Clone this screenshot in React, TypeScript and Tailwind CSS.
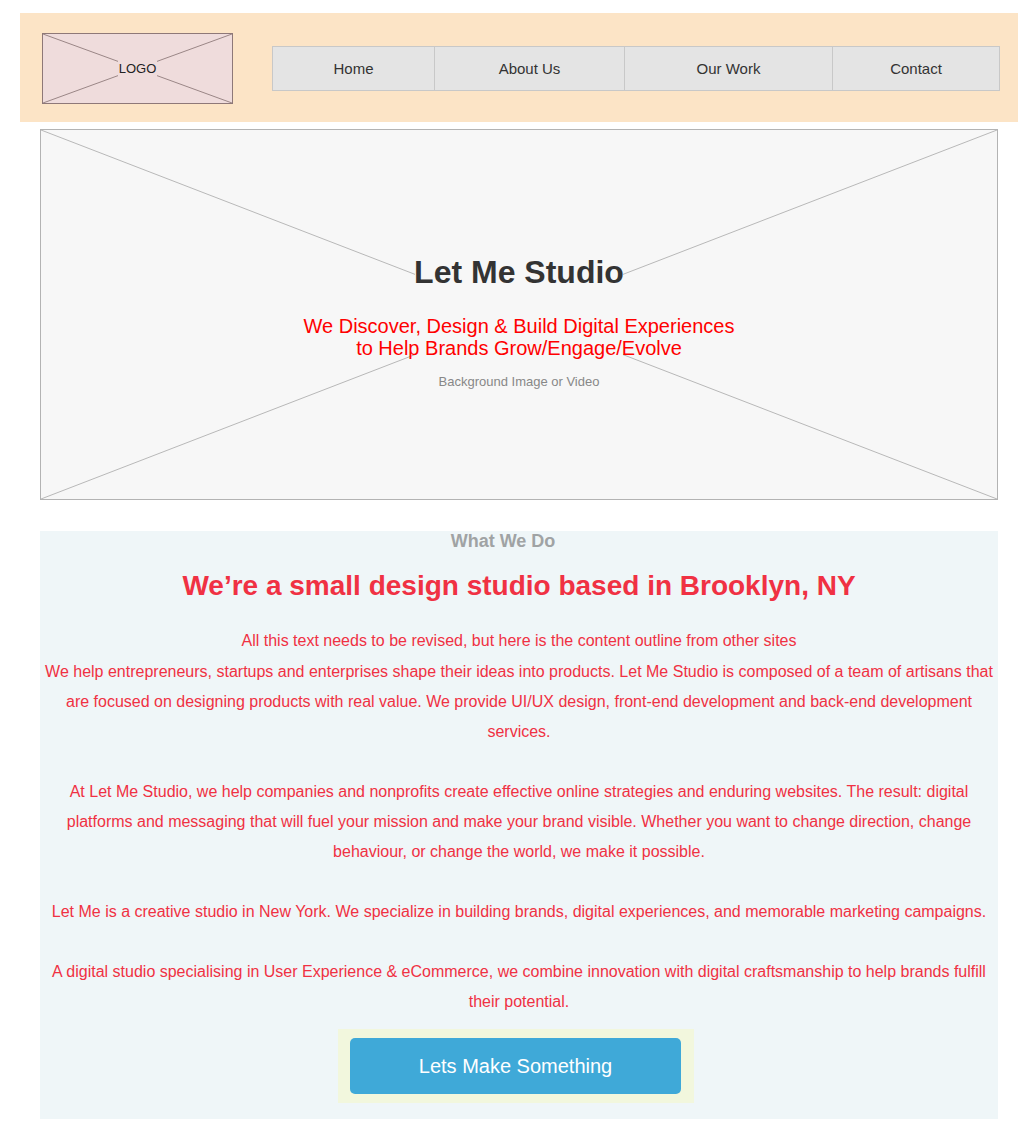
export default function App() {
  const navItems = [
    { label: "Home", w: "w-[161px]" },
    { label: "About Us", w: "w-[190px]" },
    { label: "Our Work", w: "w-[208px]" },
    { label: "Contact", w: "w-[167px]" },
  ];
  return (
    <div className="min-h-[1136px] bg-white pt-[13px] font-['Liberation_Sans',Arial,sans-serif]">
      <header className="ml-[20px] flex h-[109px] w-[998px] items-start bg-[#fce4c6]">
        <div className="relative ml-[22px] mt-[20px] flex h-[71px] w-[191px] items-center justify-center border border-[#8e7878] bg-[#efdcdc]">
          <svg className="absolute inset-0 h-full w-full" viewBox="0 0 189 69" preserveAspectRatio="none">
            <line x1="0" y1="0" x2="189" y2="69" stroke="#9a8686" strokeWidth="1" />
            <line x1="0" y1="69" x2="189" y2="0" stroke="#9a8686" strokeWidth="1" />
          </svg>
          <span className="relative bg-[#efdcdc] px-[1px] text-[13px] leading-[15px] text-[#222]">LOGO</span>
        </div>
        <nav className="ml-[39px] mt-[33px] flex h-[45px] border border-[#c8c8c8] bg-[#e4e4e4]">
          {navItems.map((n, i) => (
            <div
              key={n.label}
              className={`${n.w} flex items-center justify-center pt-[1px] text-[15px] text-[#333] ${i > 0 ? "border-l border-[#c8c8c8]" : ""}`}
            >
              {n.label}
            </div>
          ))}
        </nav>
      </header>

      <section className="relative ml-[40px] mt-[7px] h-[371px] w-[958px] border border-[#b3b3b3] bg-[#f7f7f7]">
        <svg className="absolute inset-0 h-full w-full" viewBox="0 0 956 369" preserveAspectRatio="none">
          <line x1="0" y1="0" x2="956" y2="369" stroke="#b8b8b8" strokeWidth="1" />
          <line x1="0" y1="369" x2="956" y2="0" stroke="#b8b8b8" strokeWidth="1" />
          <rect x="374" y="128" width="208" height="98" fill="#f7f7f7" />
        </svg>
        <div className="relative flex flex-col items-center pt-[124px] text-center">
          <h1 className="text-[32px] font-bold leading-[36px] text-[#333]">Let Me Studio</h1>
          <p className="mt-[25px] text-[20px] leading-[22px] text-[#ff0000]">
            We Discover, Design &amp; Build Digital Experiences
            <br />
            to Help Brands Grow/Engage/Evolve
          </p>
          <p className="mt-[15px] text-[13px] leading-[16px] text-[#888]">Background Image or Video</p>
        </div>
      </section>

      <section className="ml-[40px] mt-[31px] w-[958px] bg-[#eff6f8] pb-[16px] text-center">
        <h3 className="pr-[32px] text-[18px] font-bold leading-[20px] text-[#a0a3a4]">What We Do</h3>
        <h2 className="mt-[19px] text-[28px] font-bold leading-[32px] text-[#f03143]">
          We’re a small design studio based in Brooklyn, NY
        </h2>
        <div className="mt-[24px] whitespace-nowrap text-[16px] leading-[30px] text-[#f03143]">
          <p className="mb-[1px]">All this text needs to be revised, but here is the content outline from other sites</p>
          <p>
            We help entrepreneurs, startups and enterprises shape their ideas into products. Let Me Studio is composed of a team of artisans that
            <br />
            are focused on designing products with real value. We provide UI/UX design, front-end development and back-end development
            <br />
            services.
            <br />
            <br />
            At Let Me Studio, we help companies and nonprofits create effective online strategies and enduring websites. The result: digital
            <br />
            platforms and messaging that will fuel your mission and make your brand visible. Whether you want to change direction, change
            <br />
            behaviour, or change the world, we make it possible.
            <br />
            <br />
            Let Me is a creative studio in New York. We specialize in building brands, digital experiences, and memorable marketing campaigns.
            <br />
            <br />
            A digital studio specialising in User Experience &amp; eCommerce, we combine innovation with digital craftsmanship to help brands fulfill
            <br />
            their potential.
          </p>
        </div>
        <div className="ml-[298px] mt-[12px] w-[356px] bg-[#f2f7dd] py-[9px] pl-[12px] pr-[13px]">
          <button className="flex h-[56px] w-full items-center justify-center rounded-[5px] bg-[#3fa9d8] text-[20px] text-white">
            Lets Make Something
          </button>
        </div>
      </section>
    </div>
  );
}
